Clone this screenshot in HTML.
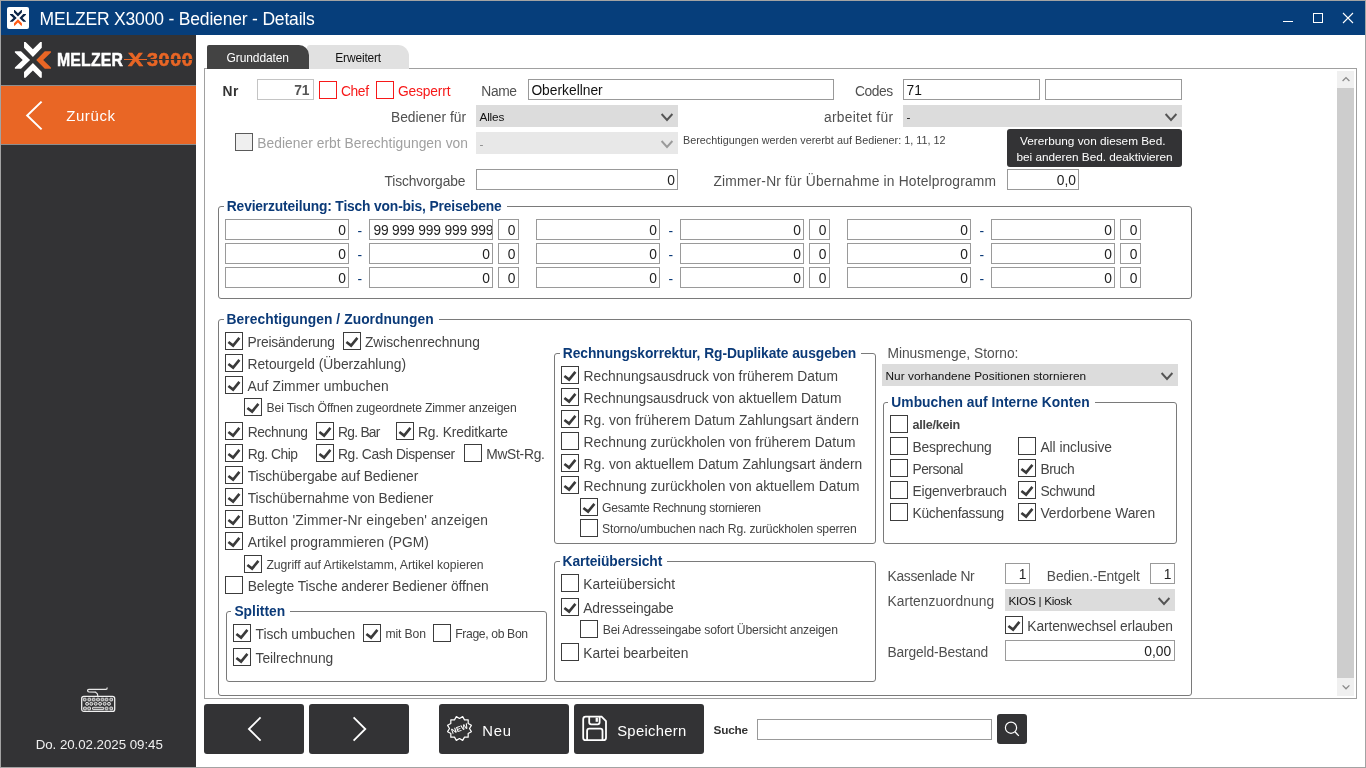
<!DOCTYPE html>
<html><head><meta charset="utf-8"><title>MELZER X3000 - Bediener - Details</title>
<style>
html,body{margin:0;padding:0;}
body{width:1366px;height:768px;overflow:hidden;position:relative;background:#fff;font-family:'Liberation Sans', sans-serif;}
.a{position:absolute;}
.t{position:absolute;height:0;}
svg.a{overflow:visible;}
</style></head><body>
<div id="root" style="position:absolute;left:0;top:0;width:1366px;height:768px;will-change:transform">
<div class="a" style="left:0px;top:0px;width:1366px;height:768px;background:#a3a3a3;"></div>
<div class="a" style="left:1px;top:1px;width:1364px;height:766px;background:#ffffff;"></div>
<div class="a" style="left:1px;top:1px;width:1364px;height:34px;background:#063e7b;"></div>
<div class="a" style="left:7px;top:7px;width:22px;height:22px;background:#fff;border-radius:2px;"></div>
<svg class="a" style="left:0px;top:0px;" width="36" height="36" viewBox="0 0 36 36"><g transform="translate(7.8 8.2) scale(0.0254 0.0254)">
<polygon points="245,70 272,70 400,198 528,70 555,70 555,172 400,330 245,172" fill="#0b2447"/>
<polygon points="245,695 272,695 400,567 528,695 555,695 555,593 400,435 245,593" fill="#ff5a14"/>
<polygon points="85,230 192,230 350,382 192,538 85,538 85,515 222,382 85,253" fill="#0b2447"/>
<polygon points="715,230 608,230 458,382 608,538 715,538 715,515 580,382 715,253" fill="#0b2447"/>
</g></svg>
<div class="t" style="left:39.50px;top:19px;font:400 17.5px/0 'Liberation Sans', sans-serif;color:#fff;white-space:nowrap;letter-spacing:-0.181px;">MELZER X3000 - Bediener - Details</div>
<div class="a" style="left:1283px;top:21px;width:10px;height:1px;background:#fff;"></div>
<div class="a" style="left:1313px;top:13px;width:10px;height:10px;border:1px solid #fff;box-sizing:border-box;"></div>
<svg class="a" style="left:1342px;top:12px;" width="12" height="12" viewBox="0 0 12 12"><path d="M1 1 L11 11 M11 1 L1 11" stroke="#fff" stroke-width="1.1"/></svg>
<div class="a" style="left:1px;top:35px;width:195px;height:732px;background:#333335;"></div>
<div class="a" style="left:1px;top:85px;width:195px;height:1px;background:#8e8e8e;"></div>
<div class="a" style="left:1px;top:86px;width:195px;height:58px;background:#e96625;"></div>
<div class="a" style="left:1px;top:144px;width:195px;height:1px;background:#8e8e8e;"></div>
<svg class="a" style="left:26px;top:100px;" width="17" height="31" viewBox="0 0 17 31"><path d="M15.6 1.6 L1.2 15.5 L15.6 29.4" fill="none" stroke="#fff" stroke-width="2"/></svg>
<div class="t" style="left:66.20px;top:116px;font:400 15px/0 'Liberation Sans', sans-serif;color:#fff;white-space:nowrap;letter-spacing:0.591px;">Zurück</div>
<svg class="a" style="left:10px;top:38px;" width="50" height="44" viewBox="0 0 50 44"><g transform="scale(0.05727 0.05729)">
<polygon points="245,70 272,70 400,198 528,70 555,70 555,172 400,330 245,172" fill="#fff"/>
<polygon points="245,695 272,695 400,567 528,695 555,695 555,593 400,435 245,593" fill="#fff"/>
<polygon points="85,230 192,230 350,382 192,538 85,538 85,515 222,382 85,253" fill="#fff"/>
<polygon points="715,230 608,230 458,382 608,538 715,538 715,515 580,382 715,253" fill="#e96625"/>
</g></svg>
<div class="a" style="left:56.9px;top:64.8px;height:0;line-height:0;"><span style="position:absolute;left:0;top:-5px;font:700 17.9px/0 'Liberation Sans', sans-serif;color:#fff;-webkit-text-stroke:0.5px #fff;transform-origin:0 0;transform:scaleX(0.885);white-space:nowrap;letter-spacing:0.2px">MELZER</span></div>
<div class="a" style="left:123.9px;top:59px;width:23px;height:1px;background:#e96625;"></div>
<div class="a" style="left:127.6px;top:64.8px;height:0;line-height:0;"><span style="position:absolute;left:0;top:-5px;font:700 17.9px/0 'Liberation Sans', sans-serif;color:#e96625;-webkit-text-stroke:0.5px #e96625;transform-origin:0 0;transform:scaleX(1.26);white-space:nowrap;letter-spacing:0px">X</span></div>
<div class="a" style="left:147.2px;top:64.8px;height:0;line-height:0;"><span style="position:absolute;left:0;top:-5px;font:700 17.9px/0 'Liberation Sans', sans-serif;color:#e96625;-webkit-text-stroke:0.6px #e96625;transform-origin:0 0;transform:scaleX(1.10);white-space:nowrap;letter-spacing:0.6px">3000</span></div>
<div class="a" style="left:148px;top:59px;width:44px;height:0.8px;background:#333335;"></div>
<svg class="a" style="left:78px;top:684px;" width="40" height="30" viewBox="0 0 40 30">
<rect x="3.7" y="12.3" width="33" height="15.1" rx="2.2" fill="none" stroke="#f0f0f0" stroke-width="1.3"/>
<path d="M19.7 12.2 L19.7 10.9 Q19.7 9.6 18.2 8.7 L17.6 8.2 L10.9 8.0 Q9.6 7.9 9.6 6.6 Q9.6 5.3 10.9 5.3 L28 5.3 Q29.2 5.3 29.2 3.4" fill="none" stroke="#e8e8e8" stroke-width="1.2"/>
<g fill="#6a6a6a" stroke="#f0f0f0" stroke-width="0.9">
<rect x="5.3" y="14.2" width="2.7" height="2.7" rx="0.5"/><rect x="10" y="14.2" width="2.7" height="2.7" rx="0.5"/><rect x="14.3" y="14.2" width="2.7" height="2.7" rx="0.5"/><rect x="18.7" y="14.2" width="2.7" height="2.7" rx="0.5"/><rect x="23.1" y="14.2" width="2.7" height="2.7" rx="0.5"/><rect x="27.2" y="14.2" width="2.7" height="2.7" rx="0.5"/><rect x="31.9" y="14.2" width="2.7" height="2.7" rx="0.5"/>
<circle cx="9.1" cy="19.8" r="1.5"/><circle cx="13.3" cy="19.8" r="1.5"/><circle cx="17.7" cy="19.8" r="1.5"/><circle cx="22.1" cy="19.8" r="1.5"/><circle cx="26.6" cy="19.8" r="1.5"/><circle cx="31" cy="19.8" r="1.5"/>
<rect x="5.6" y="23.1" width="2.7" height="2.7" rx="0.5"/><rect x="9.8" y="23.1" width="2.7" height="2.7" rx="0.5"/><rect x="14.5" y="23.3" width="11.2" height="2.3" rx="0.6"/><rect x="27.2" y="23.1" width="2.7" height="2.7" rx="0.5"/><rect x="31.9" y="23.1" width="2.7" height="2.7" rx="0.5"/>
</g></svg>
<div class="t" style="left:35.70px;top:745px;font:400 13.3px/0 'Liberation Sans', sans-serif;color:#f0f0f0;white-space:nowrap;letter-spacing:-0.042px;">Do. 20.02.2025 09:45</div>
<div class="a" style="left:204px;top:68px;width:1153px;height:631px;background:#fff;border:1px solid #a0a0a0;box-sizing:border-box;"></div>
<div class="a" style="left:307px;top:45px;width:102px;height:24px;background:#e1e1e1;border-radius:3px 11px 0 0;"></div>
<div class="a" style="left:207px;top:45px;width:102px;height:24px;background:#434343;border-radius:2px 10px 0 0;"></div>
<div class="t" style="left:226.60px;top:58px;font:400 12px/0 'Liberation Sans', sans-serif;color:#fff;white-space:nowrap;letter-spacing:-0.110px;">Grunddaten</div>
<div class="t" style="left:335.30px;top:58px;font:400 12px/0 'Liberation Sans', sans-serif;color:#111;white-space:nowrap;letter-spacing:-0.180px;">Erweitert</div>
<div class="a" style="left:1337px;top:71px;width:17px;height:625px;background:#f0f0f0;"></div>
<div class="a" style="left:1337px;top:88px;width:17px;height:590px;background:#cdcdcd;"></div>
<svg class="a" style="left:1340px;top:74px;" width="12" height="10" viewBox="0 0 12 10"><path d="M2.6 7 L6 3.6 L9.4 7" fill="none" stroke="#8a8a8a" stroke-width="1.3"/></svg>
<svg class="a" style="left:1340px;top:682px;" width="12" height="10" viewBox="0 0 12 10"><path d="M2.6 3.4 L6 6.8 L9.4 3.4" fill="none" stroke="#8a8a8a" stroke-width="1.3"/></svg>
<div class="t" style="left:222.50px;top:92px;font:700 13.8px/0 'Liberation Sans', sans-serif;color:#333;white-space:nowrap;letter-spacing:0.456px;">Nr</div>
<div class="a" style="left:257px;top:79px;width:57px;height:21px;background:#fff;border:1px solid #c4c4c4;box-sizing:border-box;"></div>
<div class="t" style="left:294.14px;top:91px;font:700 13.8px/0 'Liberation Sans', sans-serif;color:#555;white-space:nowrap;">71</div>
<div class="a" style="left:319px;top:81px;width:18px;height:18px;background:#fff;border:1px solid #f71818;box-sizing:border-box;"></div>
<div class="t" style="left:341.00px;top:92px;font:400 13.8px/0 'Liberation Sans', sans-serif;color:#f71818;white-space:nowrap;letter-spacing:-0.385px;">Chef</div>
<div class="a" style="left:376px;top:81px;width:18px;height:18px;background:#fff;border:1px solid #f71818;box-sizing:border-box;"></div>
<div class="t" style="left:398.00px;top:92px;font:400 13.8px/0 'Liberation Sans', sans-serif;color:#f71818;white-space:nowrap;letter-spacing:-0.167px;">Gesperrt</div>
<div class="t" style="left:481.30px;top:92px;font:400 13.8px/0 'Liberation Sans', sans-serif;color:#505050;white-space:nowrap;letter-spacing:-0.371px;">Name</div>
<div class="a" style="left:528px;top:79px;width:306px;height:21px;background:#fff;border:1px solid #999999;box-sizing:border-box;"></div>
<div class="t" style="left:531.40px;top:91px;font:400 13.8px/0 'Liberation Sans', sans-serif;color:#111;white-space:nowrap;">Oberkellner</div>
<div class="t" style="left:855.00px;top:92px;font:400 13.8px/0 'Liberation Sans', sans-serif;color:#505050;white-space:nowrap;letter-spacing:-0.423px;">Codes</div>
<div class="a" style="left:903px;top:79px;width:137px;height:21px;background:#fff;border:1px solid #999999;box-sizing:border-box;"></div>
<div class="t" style="left:906.50px;top:91px;font:400 13.8px/0 'Liberation Sans', sans-serif;color:#111;white-space:nowrap;">71</div>
<div class="a" style="left:1045px;top:79px;width:137px;height:21px;background:#fff;border:1px solid #999999;box-sizing:border-box;"></div>
<div class="t" style="left:391.00px;top:118px;font:400 13.8px/0 'Liberation Sans', sans-serif;color:#505050;white-space:nowrap;letter-spacing:-0.016px;">Bediener für</div>
<div class="a" style="left:476px;top:105px;width:202px;height:22px;background:#dcdcdc;"></div>
<div class="t" style="left:479.50px;top:117px;font:400 11.8px/0 'Liberation Sans', sans-serif;color:#111;white-space:nowrap;letter-spacing:-0.195px;">Alles</div>
<svg class="a" style="left:659.3px;top:110.7px;" width="16" height="12" viewBox="0 0 16 12"><path d="M2.5999999999999996 3.0 L8 9.0 L13.4 3.0" fill="none" stroke="#555" stroke-width="1.9"/></svg>
<div class="t" style="left:824.00px;top:118px;font:400 13.8px/0 'Liberation Sans', sans-serif;color:#505050;white-space:nowrap;letter-spacing:0.277px;">arbeitet für</div>
<div class="a" style="left:903px;top:105px;width:279px;height:22px;background:#dcdcdc;"></div>
<div class="t" style="left:906.50px;top:117px;font:400 11.8px/0 'Liberation Sans', sans-serif;color:#111;white-space:nowrap;">-</div>
<svg class="a" style="left:1163.3px;top:110.7px;" width="16" height="12" viewBox="0 0 16 12"><path d="M2.5999999999999996 3.0 L8 9.0 L13.4 3.0" fill="none" stroke="#555" stroke-width="1.9"/></svg>
<div class="a" style="left:235px;top:133px;width:18px;height:18px;background:#efefef;border:1px solid #5a5a5a;box-sizing:border-box;"></div>
<div class="t" style="left:257.30px;top:144px;font:400 13.8px/0 'Liberation Sans', sans-serif;color:#a0a0a0;white-space:nowrap;letter-spacing:0.042px;">Bediener erbt Berechtigungen von</div>
<div class="a" style="left:476px;top:132px;width:202px;height:22px;background:#e8e8e8;"></div>
<div class="t" style="left:479.50px;top:144px;font:400 11.8px/0 'Liberation Sans', sans-serif;color:#888;white-space:nowrap;">-</div>
<svg class="a" style="left:659.3px;top:137.7px;" width="16" height="12" viewBox="0 0 16 12"><path d="M2.5999999999999996 3.0 L8 9.0 L13.4 3.0" fill="none" stroke="#9a9a9a" stroke-width="1.9"/></svg>
<div class="t" style="left:683.00px;top:140px;font:400 10.8px/0 'Liberation Sans', sans-serif;color:#444;white-space:nowrap;letter-spacing:0.008px;">Berechtigungen werden vererbt auf Bediener: 1, 11, 12</div>
<div class="a" style="left:1007px;top:129px;width:175px;height:38px;background:#333335;border-radius:3px;"></div>
<div class="t" style="left:1020.00px;top:141px;font:400 11.8px/0 'Liberation Sans', sans-serif;color:#fff;white-space:nowrap;letter-spacing:-0.004px;">Vererbung von diesem Bed.</div>
<div class="t" style="left:1016.50px;top:157px;font:400 11.8px/0 'Liberation Sans', sans-serif;color:#fff;white-space:nowrap;letter-spacing:-0.023px;">bei anderen Bed. deaktivieren</div>
<div class="t" style="left:384.50px;top:182px;font:400 13.8px/0 'Liberation Sans', sans-serif;color:#505050;white-space:nowrap;letter-spacing:-0.128px;">Tischvorgabe</div>
<div class="a" style="left:476px;top:169px;width:202px;height:21px;background:#fff;border:1px solid #999999;box-sizing:border-box;"></div>
<div class="t" style="left:667.31px;top:181px;font:400 13.8px/0 'Liberation Sans', sans-serif;color:#222;white-space:nowrap;">0</div>
<div class="t" style="left:713.50px;top:182px;font:400 13.8px/0 'Liberation Sans', sans-serif;color:#505050;white-space:nowrap;letter-spacing:0.186px;">Zimmer-Nr für Übernahme in Hotelprogramm</div>
<div class="a" style="left:1007px;top:169px;width:72px;height:21px;background:#fff;border:1px solid #999999;box-sizing:border-box;"></div>
<div class="t" style="left:1056.81px;top:181px;font:400 13.8px/0 'Liberation Sans', sans-serif;color:#222;white-space:nowrap;">0,0</div>
<div class="a" style="left:218px;top:206px;width:974px;height:93px;border:1px solid #7a7a7a;box-sizing:border-box;border-radius:3px;"></div>
<div class="a" style="left:223.8px;top:204px;width:282.9px;height:4px;background:#fff;"></div>
<div class="t" style="left:226.80px;top:207px;font:700 13.8px/0 'Liberation Sans', sans-serif;color:#0b3a78;white-space:nowrap;letter-spacing:-0.152px;">Revierzuteilung: Tisch von-bis, Preisebene</div>
<div class="a" style="left:225px;top:219px;width:124px;height:21px;background:#fff;border:1px solid #9a9a9a;box-sizing:border-box;"></div>
<div class="t" style="left:338.31px;top:231px;font:400 13.8px/0 'Liberation Sans', sans-serif;color:#222;white-space:nowrap;">0</div>
<div class="t" style="left:357.50px;top:232px;font:400 13.8px/0 'Liberation Sans', sans-serif;color:#0b3a78;white-space:nowrap;">-</div>
<div class="a" style="left:369px;top:219px;width:124px;height:21px;background:#fff;border:1px solid #9a9a9a;box-sizing:border-box;"></div>
<div class="a" style="left:370px;top:220px;width:122px;height:19px;overflow:hidden">
<div class="t" style="left:3.40px;top:11px;font:400 13.8px/0 'Liberation Sans', sans-serif;color:#222;white-space:nowrap;letter-spacing:-0.163px;">99 999 999 999 999</div>
</div>
<div class="a" style="left:498px;top:219px;width:21px;height:21px;background:#fff;border:1px solid #9a9a9a;box-sizing:border-box;"></div>
<div class="t" style="left:507.81px;top:231px;font:400 13.8px/0 'Liberation Sans', sans-serif;color:#222;white-space:nowrap;">0</div>
<div class="a" style="left:225px;top:243px;width:124px;height:21px;background:#fff;border:1px solid #9a9a9a;box-sizing:border-box;"></div>
<div class="t" style="left:338.31px;top:255px;font:400 13.8px/0 'Liberation Sans', sans-serif;color:#222;white-space:nowrap;">0</div>
<div class="t" style="left:357.50px;top:256px;font:400 13.8px/0 'Liberation Sans', sans-serif;color:#0b3a78;white-space:nowrap;">-</div>
<div class="a" style="left:369px;top:243px;width:124px;height:21px;background:#fff;border:1px solid #9a9a9a;box-sizing:border-box;"></div>
<div class="t" style="left:482.31px;top:255px;font:400 13.8px/0 'Liberation Sans', sans-serif;color:#222;white-space:nowrap;">0</div>
<div class="a" style="left:498px;top:243px;width:21px;height:21px;background:#fff;border:1px solid #9a9a9a;box-sizing:border-box;"></div>
<div class="t" style="left:507.81px;top:255px;font:400 13.8px/0 'Liberation Sans', sans-serif;color:#222;white-space:nowrap;">0</div>
<div class="a" style="left:225px;top:267px;width:124px;height:21px;background:#fff;border:1px solid #9a9a9a;box-sizing:border-box;"></div>
<div class="t" style="left:338.31px;top:279px;font:400 13.8px/0 'Liberation Sans', sans-serif;color:#222;white-space:nowrap;">0</div>
<div class="t" style="left:357.50px;top:280px;font:400 13.8px/0 'Liberation Sans', sans-serif;color:#0b3a78;white-space:nowrap;">-</div>
<div class="a" style="left:369px;top:267px;width:124px;height:21px;background:#fff;border:1px solid #9a9a9a;box-sizing:border-box;"></div>
<div class="t" style="left:482.31px;top:279px;font:400 13.8px/0 'Liberation Sans', sans-serif;color:#222;white-space:nowrap;">0</div>
<div class="a" style="left:498px;top:267px;width:21px;height:21px;background:#fff;border:1px solid #9a9a9a;box-sizing:border-box;"></div>
<div class="t" style="left:507.81px;top:279px;font:400 13.8px/0 'Liberation Sans', sans-serif;color:#222;white-space:nowrap;">0</div>
<div class="a" style="left:536px;top:219px;width:124px;height:21px;background:#fff;border:1px solid #9a9a9a;box-sizing:border-box;"></div>
<div class="t" style="left:649.31px;top:231px;font:400 13.8px/0 'Liberation Sans', sans-serif;color:#222;white-space:nowrap;">0</div>
<div class="t" style="left:668.50px;top:232px;font:400 13.8px/0 'Liberation Sans', sans-serif;color:#0b3a78;white-space:nowrap;">-</div>
<div class="a" style="left:680px;top:219px;width:124px;height:21px;background:#fff;border:1px solid #9a9a9a;box-sizing:border-box;"></div>
<div class="t" style="left:793.31px;top:231px;font:400 13.8px/0 'Liberation Sans', sans-serif;color:#222;white-space:nowrap;">0</div>
<div class="a" style="left:809px;top:219px;width:21px;height:21px;background:#fff;border:1px solid #9a9a9a;box-sizing:border-box;"></div>
<div class="t" style="left:818.81px;top:231px;font:400 13.8px/0 'Liberation Sans', sans-serif;color:#222;white-space:nowrap;">0</div>
<div class="a" style="left:536px;top:243px;width:124px;height:21px;background:#fff;border:1px solid #9a9a9a;box-sizing:border-box;"></div>
<div class="t" style="left:649.31px;top:255px;font:400 13.8px/0 'Liberation Sans', sans-serif;color:#222;white-space:nowrap;">0</div>
<div class="t" style="left:668.50px;top:256px;font:400 13.8px/0 'Liberation Sans', sans-serif;color:#0b3a78;white-space:nowrap;">-</div>
<div class="a" style="left:680px;top:243px;width:124px;height:21px;background:#fff;border:1px solid #9a9a9a;box-sizing:border-box;"></div>
<div class="t" style="left:793.31px;top:255px;font:400 13.8px/0 'Liberation Sans', sans-serif;color:#222;white-space:nowrap;">0</div>
<div class="a" style="left:809px;top:243px;width:21px;height:21px;background:#fff;border:1px solid #9a9a9a;box-sizing:border-box;"></div>
<div class="t" style="left:818.81px;top:255px;font:400 13.8px/0 'Liberation Sans', sans-serif;color:#222;white-space:nowrap;">0</div>
<div class="a" style="left:536px;top:267px;width:124px;height:21px;background:#fff;border:1px solid #9a9a9a;box-sizing:border-box;"></div>
<div class="t" style="left:649.31px;top:279px;font:400 13.8px/0 'Liberation Sans', sans-serif;color:#222;white-space:nowrap;">0</div>
<div class="t" style="left:668.50px;top:280px;font:400 13.8px/0 'Liberation Sans', sans-serif;color:#0b3a78;white-space:nowrap;">-</div>
<div class="a" style="left:680px;top:267px;width:124px;height:21px;background:#fff;border:1px solid #9a9a9a;box-sizing:border-box;"></div>
<div class="t" style="left:793.31px;top:279px;font:400 13.8px/0 'Liberation Sans', sans-serif;color:#222;white-space:nowrap;">0</div>
<div class="a" style="left:809px;top:267px;width:21px;height:21px;background:#fff;border:1px solid #9a9a9a;box-sizing:border-box;"></div>
<div class="t" style="left:818.81px;top:279px;font:400 13.8px/0 'Liberation Sans', sans-serif;color:#222;white-space:nowrap;">0</div>
<div class="a" style="left:847px;top:219px;width:124px;height:21px;background:#fff;border:1px solid #9a9a9a;box-sizing:border-box;"></div>
<div class="t" style="left:960.31px;top:231px;font:400 13.8px/0 'Liberation Sans', sans-serif;color:#222;white-space:nowrap;">0</div>
<div class="t" style="left:979.50px;top:232px;font:400 13.8px/0 'Liberation Sans', sans-serif;color:#0b3a78;white-space:nowrap;">-</div>
<div class="a" style="left:991px;top:219px;width:124px;height:21px;background:#fff;border:1px solid #9a9a9a;box-sizing:border-box;"></div>
<div class="t" style="left:1104.31px;top:231px;font:400 13.8px/0 'Liberation Sans', sans-serif;color:#222;white-space:nowrap;">0</div>
<div class="a" style="left:1120px;top:219px;width:21px;height:21px;background:#fff;border:1px solid #9a9a9a;box-sizing:border-box;"></div>
<div class="t" style="left:1129.81px;top:231px;font:400 13.8px/0 'Liberation Sans', sans-serif;color:#222;white-space:nowrap;">0</div>
<div class="a" style="left:847px;top:243px;width:124px;height:21px;background:#fff;border:1px solid #9a9a9a;box-sizing:border-box;"></div>
<div class="t" style="left:960.31px;top:255px;font:400 13.8px/0 'Liberation Sans', sans-serif;color:#222;white-space:nowrap;">0</div>
<div class="t" style="left:979.50px;top:256px;font:400 13.8px/0 'Liberation Sans', sans-serif;color:#0b3a78;white-space:nowrap;">-</div>
<div class="a" style="left:991px;top:243px;width:124px;height:21px;background:#fff;border:1px solid #9a9a9a;box-sizing:border-box;"></div>
<div class="t" style="left:1104.31px;top:255px;font:400 13.8px/0 'Liberation Sans', sans-serif;color:#222;white-space:nowrap;">0</div>
<div class="a" style="left:1120px;top:243px;width:21px;height:21px;background:#fff;border:1px solid #9a9a9a;box-sizing:border-box;"></div>
<div class="t" style="left:1129.81px;top:255px;font:400 13.8px/0 'Liberation Sans', sans-serif;color:#222;white-space:nowrap;">0</div>
<div class="a" style="left:847px;top:267px;width:124px;height:21px;background:#fff;border:1px solid #9a9a9a;box-sizing:border-box;"></div>
<div class="t" style="left:960.31px;top:279px;font:400 13.8px/0 'Liberation Sans', sans-serif;color:#222;white-space:nowrap;">0</div>
<div class="t" style="left:979.50px;top:280px;font:400 13.8px/0 'Liberation Sans', sans-serif;color:#0b3a78;white-space:nowrap;">-</div>
<div class="a" style="left:991px;top:267px;width:124px;height:21px;background:#fff;border:1px solid #9a9a9a;box-sizing:border-box;"></div>
<div class="t" style="left:1104.31px;top:279px;font:400 13.8px/0 'Liberation Sans', sans-serif;color:#222;white-space:nowrap;">0</div>
<div class="a" style="left:1120px;top:267px;width:21px;height:21px;background:#fff;border:1px solid #9a9a9a;box-sizing:border-box;"></div>
<div class="t" style="left:1129.81px;top:279px;font:400 13.8px/0 'Liberation Sans', sans-serif;color:#222;white-space:nowrap;">0</div>
<div class="a" style="left:218px;top:319px;width:974px;height:377px;border:1px solid #7a7a7a;box-sizing:border-box;border-radius:3px;"></div>
<div class="a" style="left:223.5px;top:317px;width:215.2px;height:4px;background:#fff;"></div>
<div class="t" style="left:226.50px;top:320px;font:700 13.8px/0 'Liberation Sans', sans-serif;color:#0b3a78;white-space:nowrap;letter-spacing:0.066px;">Berechtigungen / Zuordnungen</div>
<div class="a" style="left:225px;top:332px;width:18px;height:18px;background:#fff;border:1px solid #3c3c3c;box-sizing:border-box;"></div>
<svg class="a" style="left:225px;top:332px;" width="18" height="18" viewBox="0 0 18 18"><path d="M3.4 9.9 L8.1 13.6 L14.4 5.9" fill="none" stroke="#3a3a3a" stroke-width="2.6" stroke-linecap="butt" stroke-linejoin="miter"/></svg>
<div class="t" style="left:247.50px;top:343px;font:400 13.8px/0 'Liberation Sans', sans-serif;color:#444;white-space:nowrap;letter-spacing:-0.188px;">Preisänderung</div>
<div class="a" style="left:343px;top:332px;width:18px;height:18px;background:#fff;border:1px solid #3c3c3c;box-sizing:border-box;"></div>
<svg class="a" style="left:343px;top:332px;" width="18" height="18" viewBox="0 0 18 18"><path d="M3.4 9.9 L8.1 13.6 L14.4 5.9" fill="none" stroke="#3a3a3a" stroke-width="2.6" stroke-linecap="butt" stroke-linejoin="miter"/></svg>
<div class="t" style="left:365.00px;top:343px;font:400 13.8px/0 'Liberation Sans', sans-serif;color:#444;white-space:nowrap;letter-spacing:-0.067px;">Zwischenrechnung</div>
<div class="a" style="left:225px;top:354px;width:18px;height:18px;background:#fff;border:1px solid #3c3c3c;box-sizing:border-box;"></div>
<svg class="a" style="left:225px;top:354px;" width="18" height="18" viewBox="0 0 18 18"><path d="M3.4 9.9 L8.1 13.6 L14.4 5.9" fill="none" stroke="#3a3a3a" stroke-width="2.6" stroke-linecap="butt" stroke-linejoin="miter"/></svg>
<div class="t" style="left:247.50px;top:365px;font:400 13.8px/0 'Liberation Sans', sans-serif;color:#444;white-space:nowrap;letter-spacing:-0.012px;">Retourgeld (Überzahlung)</div>
<div class="a" style="left:225px;top:376px;width:18px;height:18px;background:#fff;border:1px solid #3c3c3c;box-sizing:border-box;"></div>
<svg class="a" style="left:225px;top:376px;" width="18" height="18" viewBox="0 0 18 18"><path d="M3.4 9.9 L8.1 13.6 L14.4 5.9" fill="none" stroke="#3a3a3a" stroke-width="2.6" stroke-linecap="butt" stroke-linejoin="miter"/></svg>
<div class="t" style="left:247.50px;top:387px;font:400 13.8px/0 'Liberation Sans', sans-serif;color:#444;white-space:nowrap;letter-spacing:0.097px;">Auf Zimmer umbuchen</div>
<div class="a" style="left:244px;top:398px;width:18px;height:18px;background:#fff;border:1px solid #3c3c3c;box-sizing:border-box;"></div>
<svg class="a" style="left:244px;top:398px;" width="18" height="18" viewBox="0 0 18 18"><path d="M3.4 9.9 L8.1 13.6 L14.4 5.9" fill="none" stroke="#3a3a3a" stroke-width="2.6" stroke-linecap="butt" stroke-linejoin="miter"/></svg>
<div class="t" style="left:266.60px;top:408px;font:400 12.2px/0 'Liberation Sans', sans-serif;color:#444;white-space:nowrap;letter-spacing:-0.181px;">Bei Tisch Öffnen zugeordnete Zimmer anzeigen</div>
<div class="a" style="left:225px;top:422px;width:18px;height:18px;background:#fff;border:1px solid #3c3c3c;box-sizing:border-box;"></div>
<svg class="a" style="left:225px;top:422px;" width="18" height="18" viewBox="0 0 18 18"><path d="M3.4 9.9 L8.1 13.6 L14.4 5.9" fill="none" stroke="#3a3a3a" stroke-width="2.6" stroke-linecap="butt" stroke-linejoin="miter"/></svg>
<div class="t" style="left:247.70px;top:433px;font:400 13.8px/0 'Liberation Sans', sans-serif;color:#444;white-space:nowrap;letter-spacing:-0.387px;">Rechnung</div>
<div class="a" style="left:316px;top:422px;width:18px;height:18px;background:#fff;border:1px solid #3c3c3c;box-sizing:border-box;"></div>
<svg class="a" style="left:316px;top:422px;" width="18" height="18" viewBox="0 0 18 18"><path d="M3.4 9.9 L8.1 13.6 L14.4 5.9" fill="none" stroke="#3a3a3a" stroke-width="2.6" stroke-linecap="butt" stroke-linejoin="miter"/></svg>
<div class="t" style="left:338.00px;top:433px;font:400 13.8px/0 'Liberation Sans', sans-serif;color:#444;white-space:nowrap;letter-spacing:-0.730px;">Rg. Bar</div>
<div class="a" style="left:396px;top:422px;width:18px;height:18px;background:#fff;border:1px solid #3c3c3c;box-sizing:border-box;"></div>
<svg class="a" style="left:396px;top:422px;" width="18" height="18" viewBox="0 0 18 18"><path d="M3.4 9.9 L8.1 13.6 L14.4 5.9" fill="none" stroke="#3a3a3a" stroke-width="2.6" stroke-linecap="butt" stroke-linejoin="miter"/></svg>
<div class="t" style="left:418.00px;top:433px;font:400 13.8px/0 'Liberation Sans', sans-serif;color:#444;white-space:nowrap;letter-spacing:-0.145px;">Rg. Kreditkarte</div>
<div class="a" style="left:225px;top:444px;width:18px;height:18px;background:#fff;border:1px solid #3c3c3c;box-sizing:border-box;"></div>
<svg class="a" style="left:225px;top:444px;" width="18" height="18" viewBox="0 0 18 18"><path d="M3.4 9.9 L8.1 13.6 L14.4 5.9" fill="none" stroke="#3a3a3a" stroke-width="2.6" stroke-linecap="butt" stroke-linejoin="miter"/></svg>
<div class="t" style="left:247.70px;top:455px;font:400 13.8px/0 'Liberation Sans', sans-serif;color:#444;white-space:nowrap;letter-spacing:-0.498px;">Rg. Chip</div>
<div class="a" style="left:316px;top:444px;width:18px;height:18px;background:#fff;border:1px solid #3c3c3c;box-sizing:border-box;"></div>
<svg class="a" style="left:316px;top:444px;" width="18" height="18" viewBox="0 0 18 18"><path d="M3.4 9.9 L8.1 13.6 L14.4 5.9" fill="none" stroke="#3a3a3a" stroke-width="2.6" stroke-linecap="butt" stroke-linejoin="miter"/></svg>
<div class="t" style="left:338.00px;top:455px;font:400 13.8px/0 'Liberation Sans', sans-serif;color:#444;white-space:nowrap;letter-spacing:-0.369px;">Rg. Cash Dispenser</div>
<div class="a" style="left:464px;top:444px;width:18px;height:18px;background:#fff;border:1px solid #3c3c3c;box-sizing:border-box;"></div>
<div class="t" style="left:486.20px;top:455px;font:400 13.8px/0 'Liberation Sans', sans-serif;color:#444;white-space:nowrap;letter-spacing:-0.266px;">MwSt-Rg.</div>
<div class="a" style="left:225px;top:466px;width:18px;height:18px;background:#fff;border:1px solid #3c3c3c;box-sizing:border-box;"></div>
<svg class="a" style="left:225px;top:466px;" width="18" height="18" viewBox="0 0 18 18"><path d="M3.4 9.9 L8.1 13.6 L14.4 5.9" fill="none" stroke="#3a3a3a" stroke-width="2.6" stroke-linecap="butt" stroke-linejoin="miter"/></svg>
<div class="t" style="left:247.70px;top:477px;font:400 13.8px/0 'Liberation Sans', sans-serif;color:#444;white-space:nowrap;letter-spacing:-0.090px;">Tischübergabe auf Bediener</div>
<div class="a" style="left:225px;top:488px;width:18px;height:18px;background:#fff;border:1px solid #3c3c3c;box-sizing:border-box;"></div>
<svg class="a" style="left:225px;top:488px;" width="18" height="18" viewBox="0 0 18 18"><path d="M3.4 9.9 L8.1 13.6 L14.4 5.9" fill="none" stroke="#3a3a3a" stroke-width="2.6" stroke-linecap="butt" stroke-linejoin="miter"/></svg>
<div class="t" style="left:247.70px;top:499px;font:400 13.8px/0 'Liberation Sans', sans-serif;color:#444;white-space:nowrap;letter-spacing:-0.065px;">Tischübernahme von Bediener</div>
<div class="a" style="left:225px;top:510px;width:18px;height:18px;background:#fff;border:1px solid #3c3c3c;box-sizing:border-box;"></div>
<svg class="a" style="left:225px;top:510px;" width="18" height="18" viewBox="0 0 18 18"><path d="M3.4 9.9 L8.1 13.6 L14.4 5.9" fill="none" stroke="#3a3a3a" stroke-width="2.6" stroke-linecap="butt" stroke-linejoin="miter"/></svg>
<div class="t" style="left:247.70px;top:521px;font:400 13.8px/0 'Liberation Sans', sans-serif;color:#444;white-space:nowrap;letter-spacing:0.142px;">Button &#x27;Zimmer-Nr eingeben&#x27; anzeigen</div>
<div class="a" style="left:225px;top:532px;width:18px;height:18px;background:#fff;border:1px solid #3c3c3c;box-sizing:border-box;"></div>
<svg class="a" style="left:225px;top:532px;" width="18" height="18" viewBox="0 0 18 18"><path d="M3.4 9.9 L8.1 13.6 L14.4 5.9" fill="none" stroke="#3a3a3a" stroke-width="2.6" stroke-linecap="butt" stroke-linejoin="miter"/></svg>
<div class="t" style="left:247.70px;top:543px;font:400 13.8px/0 'Liberation Sans', sans-serif;color:#444;white-space:nowrap;letter-spacing:0.043px;">Artikel programmieren (PGM)</div>
<div class="a" style="left:244px;top:555px;width:18px;height:18px;background:#fff;border:1px solid #3c3c3c;box-sizing:border-box;"></div>
<svg class="a" style="left:244px;top:555px;" width="18" height="18" viewBox="0 0 18 18"><path d="M3.4 9.9 L8.1 13.6 L14.4 5.9" fill="none" stroke="#3a3a3a" stroke-width="2.6" stroke-linecap="butt" stroke-linejoin="miter"/></svg>
<div class="t" style="left:266.40px;top:565px;font:400 12.2px/0 'Liberation Sans', sans-serif;color:#444;white-space:nowrap;letter-spacing:-0.017px;">Zugriff auf Artikelstamm, Artikel kopieren</div>
<div class="a" style="left:225px;top:576px;width:18px;height:18px;background:#fff;border:1px solid #3c3c3c;box-sizing:border-box;"></div>
<div class="t" style="left:247.70px;top:587px;font:400 13.8px/0 'Liberation Sans', sans-serif;color:#444;white-space:nowrap;letter-spacing:-0.049px;">Belegte Tische anderer Bediener öffnen</div>
<div class="a" style="left:226px;top:611px;width:321px;height:71px;border:1px solid #7a7a7a;box-sizing:border-box;border-radius:3px;"></div>
<div class="a" style="left:231.4px;top:609px;width:58.79999999999998px;height:4px;background:#fff;"></div>
<div class="t" style="left:234.40px;top:612px;font:700 13.8px/0 'Liberation Sans', sans-serif;color:#0b3a78;white-space:nowrap;letter-spacing:0.029px;">Splitten</div>
<div class="a" style="left:233px;top:624px;width:18px;height:18px;background:#fff;border:1px solid #3c3c3c;box-sizing:border-box;"></div>
<svg class="a" style="left:233px;top:624px;" width="18" height="18" viewBox="0 0 18 18"><path d="M3.4 9.9 L8.1 13.6 L14.4 5.9" fill="none" stroke="#3a3a3a" stroke-width="2.6" stroke-linecap="butt" stroke-linejoin="miter"/></svg>
<div class="t" style="left:255.60px;top:635px;font:400 13.8px/0 'Liberation Sans', sans-serif;color:#444;white-space:nowrap;letter-spacing:-0.094px;">Tisch umbuchen</div>
<div class="a" style="left:363px;top:624px;width:18px;height:18px;background:#fff;border:1px solid #3c3c3c;box-sizing:border-box;"></div>
<svg class="a" style="left:363px;top:624px;" width="18" height="18" viewBox="0 0 18 18"><path d="M3.4 9.9 L8.1 13.6 L14.4 5.9" fill="none" stroke="#3a3a3a" stroke-width="2.6" stroke-linecap="butt" stroke-linejoin="miter"/></svg>
<div class="t" style="left:385.50px;top:634px;font:400 12.2px/0 'Liberation Sans', sans-serif;color:#444;white-space:nowrap;letter-spacing:-0.138px;">mit Bon</div>
<div class="a" style="left:433px;top:624px;width:18px;height:18px;background:#fff;border:1px solid #3c3c3c;box-sizing:border-box;"></div>
<div class="t" style="left:455.20px;top:634px;font:400 12.2px/0 'Liberation Sans', sans-serif;color:#444;white-space:nowrap;letter-spacing:-0.362px;">Frage, ob Bon</div>
<div class="a" style="left:233px;top:648px;width:18px;height:18px;background:#fff;border:1px solid #3c3c3c;box-sizing:border-box;"></div>
<svg class="a" style="left:233px;top:648px;" width="18" height="18" viewBox="0 0 18 18"><path d="M3.4 9.9 L8.1 13.6 L14.4 5.9" fill="none" stroke="#3a3a3a" stroke-width="2.6" stroke-linecap="butt" stroke-linejoin="miter"/></svg>
<div class="t" style="left:255.60px;top:659px;font:400 13.8px/0 'Liberation Sans', sans-serif;color:#444;white-space:nowrap;letter-spacing:-0.058px;">Teilrechnung</div>
<div class="a" style="left:554px;top:353px;width:322px;height:191px;border:1px solid #7a7a7a;box-sizing:border-box;border-radius:3px;"></div>
<div class="a" style="left:559.8px;top:351px;width:301.4000000000001px;height:4px;background:#fff;"></div>
<div class="t" style="left:562.80px;top:354px;font:700 13.8px/0 'Liberation Sans', sans-serif;color:#0b3a78;white-space:nowrap;letter-spacing:-0.063px;">Rechnungskorrektur, Rg-Duplikate ausgeben</div>
<div class="a" style="left:561px;top:366px;width:18px;height:18px;background:#fff;border:1px solid #3c3c3c;box-sizing:border-box;"></div>
<svg class="a" style="left:561px;top:366px;" width="18" height="18" viewBox="0 0 18 18"><path d="M3.4 9.9 L8.1 13.6 L14.4 5.9" fill="none" stroke="#3a3a3a" stroke-width="2.6" stroke-linecap="butt" stroke-linejoin="miter"/></svg>
<div class="t" style="left:583.60px;top:377px;font:400 13.8px/0 'Liberation Sans', sans-serif;color:#444;white-space:nowrap;letter-spacing:-0.031px;">Rechnungsausdruck von früherem Datum</div>
<div class="a" style="left:561px;top:388px;width:18px;height:18px;background:#fff;border:1px solid #3c3c3c;box-sizing:border-box;"></div>
<svg class="a" style="left:561px;top:388px;" width="18" height="18" viewBox="0 0 18 18"><path d="M3.4 9.9 L8.1 13.6 L14.4 5.9" fill="none" stroke="#3a3a3a" stroke-width="2.6" stroke-linecap="butt" stroke-linejoin="miter"/></svg>
<div class="t" style="left:583.60px;top:399px;font:400 13.8px/0 'Liberation Sans', sans-serif;color:#444;white-space:nowrap;letter-spacing:-0.039px;">Rechnungsausdruck von aktuellem Datum</div>
<div class="a" style="left:561px;top:410px;width:18px;height:18px;background:#fff;border:1px solid #3c3c3c;box-sizing:border-box;"></div>
<svg class="a" style="left:561px;top:410px;" width="18" height="18" viewBox="0 0 18 18"><path d="M3.4 9.9 L8.1 13.6 L14.4 5.9" fill="none" stroke="#3a3a3a" stroke-width="2.6" stroke-linecap="butt" stroke-linejoin="miter"/></svg>
<div class="t" style="left:583.60px;top:421px;font:400 13.8px/0 'Liberation Sans', sans-serif;color:#444;white-space:nowrap;letter-spacing:0.019px;">Rg. von früherem Datum Zahlungsart ändern</div>
<div class="a" style="left:561px;top:432px;width:18px;height:18px;background:#fff;border:1px solid #3c3c3c;box-sizing:border-box;"></div>
<div class="t" style="left:583.60px;top:443px;font:400 13.8px/0 'Liberation Sans', sans-serif;color:#444;white-space:nowrap;letter-spacing:0.028px;">Rechnung zurückholen von früherem Datum</div>
<div class="a" style="left:561px;top:454px;width:18px;height:18px;background:#fff;border:1px solid #3c3c3c;box-sizing:border-box;"></div>
<svg class="a" style="left:561px;top:454px;" width="18" height="18" viewBox="0 0 18 18"><path d="M3.4 9.9 L8.1 13.6 L14.4 5.9" fill="none" stroke="#3a3a3a" stroke-width="2.6" stroke-linecap="butt" stroke-linejoin="miter"/></svg>
<div class="t" style="left:583.60px;top:465px;font:400 13.8px/0 'Liberation Sans', sans-serif;color:#444;white-space:nowrap;letter-spacing:0.005px;">Rg. von aktuellem Datum Zahlungsart ändern</div>
<div class="a" style="left:561px;top:476px;width:18px;height:18px;background:#fff;border:1px solid #3c3c3c;box-sizing:border-box;"></div>
<svg class="a" style="left:561px;top:476px;" width="18" height="18" viewBox="0 0 18 18"><path d="M3.4 9.9 L8.1 13.6 L14.4 5.9" fill="none" stroke="#3a3a3a" stroke-width="2.6" stroke-linecap="butt" stroke-linejoin="miter"/></svg>
<div class="t" style="left:583.60px;top:487px;font:400 13.8px/0 'Liberation Sans', sans-serif;color:#444;white-space:nowrap;letter-spacing:0.034px;">Rechnung zurückholen von aktuellem Datum</div>
<div class="a" style="left:580px;top:498px;width:18px;height:18px;background:#fff;border:1px solid #3c3c3c;box-sizing:border-box;"></div>
<svg class="a" style="left:580px;top:498px;" width="18" height="18" viewBox="0 0 18 18"><path d="M3.4 9.9 L8.1 13.6 L14.4 5.9" fill="none" stroke="#3a3a3a" stroke-width="2.6" stroke-linecap="butt" stroke-linejoin="miter"/></svg>
<div class="t" style="left:602.00px;top:508px;font:400 12.2px/0 'Liberation Sans', sans-serif;color:#444;white-space:nowrap;letter-spacing:-0.269px;">Gesamte Rechnung stornieren</div>
<div class="a" style="left:580px;top:519px;width:18px;height:18px;background:#fff;border:1px solid #3c3c3c;box-sizing:border-box;"></div>
<div class="t" style="left:602.00px;top:529px;font:400 12.2px/0 'Liberation Sans', sans-serif;color:#444;white-space:nowrap;letter-spacing:-0.174px;">Storno/umbuchen nach Rg. zurückholen sperren</div>
<div class="a" style="left:554px;top:561px;width:322px;height:121px;border:1px solid #7a7a7a;box-sizing:border-box;border-radius:3px;"></div>
<div class="a" style="left:559.6px;top:559px;width:107.69999999999993px;height:4px;background:#fff;"></div>
<div class="t" style="left:562.60px;top:562px;font:700 13.8px/0 'Liberation Sans', sans-serif;color:#0b3a78;white-space:nowrap;letter-spacing:-0.108px;">Karteiübersicht</div>
<div class="a" style="left:561px;top:574px;width:18px;height:18px;background:#fff;border:1px solid #3c3c3c;box-sizing:border-box;"></div>
<div class="t" style="left:583.30px;top:585px;font:400 13.8px/0 'Liberation Sans', sans-serif;color:#444;white-space:nowrap;letter-spacing:-0.017px;">Karteiübersicht</div>
<div class="a" style="left:561px;top:598px;width:18px;height:18px;background:#fff;border:1px solid #3c3c3c;box-sizing:border-box;"></div>
<svg class="a" style="left:561px;top:598px;" width="18" height="18" viewBox="0 0 18 18"><path d="M3.4 9.9 L8.1 13.6 L14.4 5.9" fill="none" stroke="#3a3a3a" stroke-width="2.6" stroke-linecap="butt" stroke-linejoin="miter"/></svg>
<div class="t" style="left:583.30px;top:609px;font:400 13.8px/0 'Liberation Sans', sans-serif;color:#444;white-space:nowrap;letter-spacing:-0.137px;">Adresseingabe</div>
<div class="a" style="left:580px;top:620px;width:18px;height:18px;background:#fff;border:1px solid #3c3c3c;box-sizing:border-box;"></div>
<div class="t" style="left:602.70px;top:630px;font:400 12.2px/0 'Liberation Sans', sans-serif;color:#444;white-space:nowrap;letter-spacing:-0.189px;">Bei Adresseingabe sofort Übersicht anzeigen</div>
<div class="a" style="left:561px;top:643px;width:18px;height:18px;background:#fff;border:1px solid #3c3c3c;box-sizing:border-box;"></div>
<div class="t" style="left:583.30px;top:654px;font:400 13.8px/0 'Liberation Sans', sans-serif;color:#444;white-space:nowrap;letter-spacing:0.000px;">Kartei bearbeiten</div>
<div class="t" style="left:887.40px;top:354px;font:400 13.8px/0 'Liberation Sans', sans-serif;color:#505050;white-space:nowrap;letter-spacing:-0.008px;">Minusmenge, Storno:</div>
<div class="a" style="left:882px;top:364px;width:296px;height:22px;background:#dcdcdc;"></div>
<div class="t" style="left:885.50px;top:376px;font:400 11.8px/0 'Liberation Sans', sans-serif;color:#111;white-space:nowrap;letter-spacing:0.054px;">Nur vorhandene Positionen stornieren</div>
<svg class="a" style="left:1159.3px;top:369.7px;" width="16" height="12" viewBox="0 0 16 12"><path d="M2.5999999999999996 3.0 L8 9.0 L13.4 3.0" fill="none" stroke="#555" stroke-width="1.9"/></svg>
<div class="a" style="left:883px;top:402px;width:294px;height:142px;border:1px solid #7a7a7a;box-sizing:border-box;border-radius:3px;"></div>
<div class="a" style="left:888.3px;top:400px;width:206.29999999999995px;height:4px;background:#fff;"></div>
<div class="t" style="left:891.30px;top:403px;font:700 13.8px/0 'Liberation Sans', sans-serif;color:#0b3a78;white-space:nowrap;letter-spacing:0.050px;">Umbuchen auf Interne Konten</div>
<div class="a" style="left:890px;top:415px;width:18px;height:18px;background:#fff;border:1px solid #3c3c3c;box-sizing:border-box;"></div>
<div class="t" style="left:912.50px;top:425px;font:700 12.6px/0 'Liberation Sans', sans-serif;color:#444;white-space:nowrap;letter-spacing:-0.240px;">alle/kein</div>
<div class="a" style="left:890px;top:437px;width:18px;height:18px;background:#fff;border:1px solid #3c3c3c;box-sizing:border-box;"></div>
<div class="t" style="left:912.50px;top:448px;font:400 13.8px/0 'Liberation Sans', sans-serif;color:#444;white-space:nowrap;letter-spacing:-0.211px;">Besprechung</div>
<div class="a" style="left:1018px;top:437px;width:18px;height:18px;background:#fff;border:1px solid #3c3c3c;box-sizing:border-box;"></div>
<div class="t" style="left:1040.40px;top:448px;font:400 13.8px/0 'Liberation Sans', sans-serif;color:#444;white-space:nowrap;letter-spacing:-0.040px;">All inclusive</div>
<div class="a" style="left:890px;top:459px;width:18px;height:18px;background:#fff;border:1px solid #3c3c3c;box-sizing:border-box;"></div>
<div class="t" style="left:912.50px;top:470px;font:400 13.8px/0 'Liberation Sans', sans-serif;color:#444;white-space:nowrap;letter-spacing:-0.524px;">Personal</div>
<div class="a" style="left:1018px;top:459px;width:18px;height:18px;background:#fff;border:1px solid #3c3c3c;box-sizing:border-box;"></div>
<svg class="a" style="left:1018px;top:459px;" width="18" height="18" viewBox="0 0 18 18"><path d="M3.4 9.9 L8.1 13.6 L14.4 5.9" fill="none" stroke="#3a3a3a" stroke-width="2.6" stroke-linecap="butt" stroke-linejoin="miter"/></svg>
<div class="t" style="left:1040.40px;top:470px;font:400 13.8px/0 'Liberation Sans', sans-serif;color:#444;white-space:nowrap;letter-spacing:-0.462px;">Bruch</div>
<div class="a" style="left:890px;top:481px;width:18px;height:18px;background:#fff;border:1px solid #3c3c3c;box-sizing:border-box;"></div>
<div class="t" style="left:912.50px;top:492px;font:400 13.8px/0 'Liberation Sans', sans-serif;color:#444;white-space:nowrap;letter-spacing:-0.165px;">Eigenverbrauch</div>
<div class="a" style="left:1018px;top:481px;width:18px;height:18px;background:#fff;border:1px solid #3c3c3c;box-sizing:border-box;"></div>
<svg class="a" style="left:1018px;top:481px;" width="18" height="18" viewBox="0 0 18 18"><path d="M3.4 9.9 L8.1 13.6 L14.4 5.9" fill="none" stroke="#3a3a3a" stroke-width="2.6" stroke-linecap="butt" stroke-linejoin="miter"/></svg>
<div class="t" style="left:1040.40px;top:492px;font:400 13.8px/0 'Liberation Sans', sans-serif;color:#444;white-space:nowrap;letter-spacing:-0.311px;">Schwund</div>
<div class="a" style="left:890px;top:503px;width:18px;height:18px;background:#fff;border:1px solid #3c3c3c;box-sizing:border-box;"></div>
<div class="t" style="left:912.50px;top:514px;font:400 13.8px/0 'Liberation Sans', sans-serif;color:#444;white-space:nowrap;letter-spacing:-0.277px;">Küchenfassung</div>
<div class="a" style="left:1018px;top:503px;width:18px;height:18px;background:#fff;border:1px solid #3c3c3c;box-sizing:border-box;"></div>
<svg class="a" style="left:1018px;top:503px;" width="18" height="18" viewBox="0 0 18 18"><path d="M3.4 9.9 L8.1 13.6 L14.4 5.9" fill="none" stroke="#3a3a3a" stroke-width="2.6" stroke-linecap="butt" stroke-linejoin="miter"/></svg>
<div class="t" style="left:1040.40px;top:514px;font:400 13.8px/0 'Liberation Sans', sans-serif;color:#444;white-space:nowrap;letter-spacing:-0.034px;">Verdorbene Waren</div>
<div class="t" style="left:887.50px;top:577px;font:400 13.8px/0 'Liberation Sans', sans-serif;color:#505050;white-space:nowrap;letter-spacing:-0.275px;">Kassenlade Nr</div>
<div class="a" style="left:1005px;top:563px;width:25px;height:21px;background:#fff;border:1px solid #9a9a9a;box-sizing:border-box;"></div>
<div class="t" style="left:1018.81px;top:575px;font:400 13.8px/0 'Liberation Sans', sans-serif;color:#222;white-space:nowrap;">1</div>
<div class="t" style="left:1046.80px;top:577px;font:400 13.8px/0 'Liberation Sans', sans-serif;color:#505050;white-space:nowrap;letter-spacing:-0.096px;">Bedien.-Entgelt</div>
<div class="a" style="left:1150px;top:563px;width:25px;height:21px;background:#fff;border:1px solid #9a9a9a;box-sizing:border-box;"></div>
<div class="t" style="left:1163.81px;top:575px;font:400 13.8px/0 'Liberation Sans', sans-serif;color:#222;white-space:nowrap;">1</div>
<div class="t" style="left:887.50px;top:602px;font:400 13.8px/0 'Liberation Sans', sans-serif;color:#505050;white-space:nowrap;letter-spacing:0.053px;">Kartenzuordnung</div>
<div class="a" style="left:1005px;top:589px;width:170px;height:22px;background:#dcdcdc;"></div>
<div class="t" style="left:1008.50px;top:601px;font:400 11.8px/0 'Liberation Sans', sans-serif;color:#111;white-space:nowrap;letter-spacing:-0.307px;">KIOS | Kiosk</div>
<svg class="a" style="left:1156.3px;top:594.7px;" width="16" height="12" viewBox="0 0 16 12"><path d="M2.5999999999999996 3.0 L8 9.0 L13.4 3.0" fill="none" stroke="#555" stroke-width="1.9"/></svg>
<div class="a" style="left:1005px;top:616px;width:18px;height:18px;background:#fff;border:1px solid #3c3c3c;box-sizing:border-box;"></div>
<svg class="a" style="left:1005px;top:616px;" width="18" height="18" viewBox="0 0 18 18"><path d="M3.4 9.9 L8.1 13.6 L14.4 5.9" fill="none" stroke="#3a3a3a" stroke-width="2.6" stroke-linecap="butt" stroke-linejoin="miter"/></svg>
<div class="t" style="left:1027.30px;top:627px;font:400 13.8px/0 'Liberation Sans', sans-serif;color:#444;white-space:nowrap;letter-spacing:-0.116px;">Kartenwechsel erlauben</div>
<div class="t" style="left:887.50px;top:653px;font:400 13.8px/0 'Liberation Sans', sans-serif;color:#505050;white-space:nowrap;letter-spacing:-0.156px;">Bargeld-Bestand</div>
<div class="a" style="left:1005px;top:640px;width:170px;height:21px;background:#fff;border:1px solid #9a9a9a;box-sizing:border-box;"></div>
<div class="t" style="left:1144.34px;top:652px;font:400 13.8px/0 'Liberation Sans', sans-serif;color:#222;white-space:nowrap;">0,00</div>
<div class="a" style="left:204px;top:704px;width:100px;height:50px;background:#333335;border-radius:3px;"></div>
<div class="a" style="left:309px;top:704px;width:100px;height:50px;background:#333335;border-radius:3px;"></div>
<svg class="a" style="left:246px;top:715px;" width="18" height="28" viewBox="0 0 18 28"><path d="M14.6 2.4 L2.9 14 L14.6 25.6" fill="none" stroke="#fff" stroke-width="1.8"/></svg>
<svg class="a" style="left:351px;top:715px;" width="18" height="28" viewBox="0 0 18 28"><path d="M2.6 2.4 L14.3 14 L2.6 25.6" fill="none" stroke="#fff" stroke-width="1.8"/></svg>
<div class="a" style="left:439px;top:704px;width:130px;height:50px;background:#333335;border-radius:3px;"></div>
<div class="a" style="left:574px;top:704px;width:130px;height:50px;background:#333335;border-radius:3px;"></div>
<svg class="a" style="left:447px;top:716px;" width="25" height="25" viewBox="0 0 25 25"><polygon points="15.68,0.62 17.50,3.84 21.20,3.80 21.16,7.50 24.38,9.32 22.50,12.50 24.38,15.68 21.16,17.50 21.20,21.20 17.50,21.16 15.68,24.38 12.50,22.50 9.32,24.38 7.50,21.16 3.80,21.20 3.84,17.50 0.62,15.68 2.50,12.50 0.62,9.32 3.84,7.50 3.80,3.80 7.50,3.84 9.32,0.62 12.50,2.50" fill="none" stroke="#fff" stroke-width="1.2" stroke-linejoin="round"/><text x="12.5" y="15.3" text-anchor="middle" font-family="Liberation Sans" font-weight="700" font-size="7.4" fill="#fff" transform="rotate(-20 12.5 12.5)">NEW</text></svg>
<div class="t" style="left:482.30px;top:731px;font:400 14.8px/0 'Liberation Sans', sans-serif;color:#fff;white-space:nowrap;letter-spacing:0.822px;">Neu</div>
<svg class="a" style="left:575px;top:708px;" width="50" height="40" viewBox="0 0 50 40"><path d="M8.2 11.2 Q8.2 8.7 10.7 8.7 L26.6 8.7 L31 13.1 L31 29.7 Q31 32.2 28.5 32.2 L10.7 32.2 Q8.2 32.2 8.2 29.7 Z" fill="none" stroke="#fff" stroke-width="1.8"/>
<path d="M14.2 8.7 L14.2 14.3 Q14.2 16.3 16.2 16.3 L22.6 16.3 Q24.6 16.3 24.6 14.3 L24.6 8.7" fill="none" stroke="#fff" stroke-width="1.8"/>
<rect x="20.6" y="9.6" width="2.3" height="4.2" fill="#fff"/>
<path d="M12.1 32.2 L12.1 22.9 Q12.1 20.7 14.3 20.7 L25.3 20.7 Q27.5 20.7 27.5 22.9 L27.5 32.2" fill="none" stroke="#fff" stroke-width="1.8"/></svg>
<div class="t" style="left:617.20px;top:731px;font:400 14.8px/0 'Liberation Sans', sans-serif;color:#fff;white-space:nowrap;letter-spacing:0.307px;">Speichern</div>
<div class="t" style="left:713.60px;top:730px;font:700 11.8px/0 'Liberation Sans', sans-serif;color:#333;white-space:nowrap;letter-spacing:-0.252px;">Suche</div>
<div class="a" style="left:757px;top:719px;width:235px;height:21px;background:#fff;border:1px solid #999999;box-sizing:border-box;"></div>
<div class="a" style="left:997px;top:714px;width:30px;height:30px;background:#333335;border-radius:3px;"></div>
<svg class="a" style="left:1002px;top:719px;" width="20" height="20" viewBox="0 0 20 20"><circle cx="9" cy="8.7" r="5.6" fill="none" stroke="#fff" stroke-width="1.2"/><path d="M13 12.7 L16.8 16.9" stroke="#fff" stroke-width="1.3"/></svg>
</div>
</body></html>
